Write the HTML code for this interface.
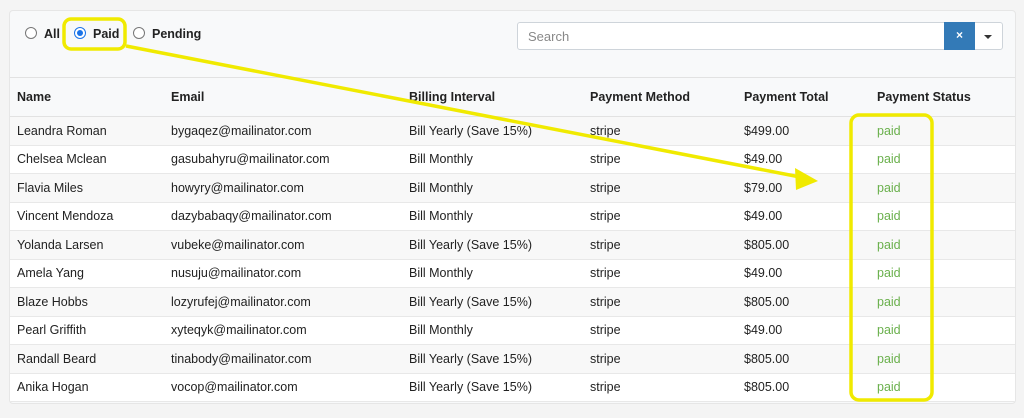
<!DOCTYPE html><html><head><style>
body{margin:0;width:1024px;height:418px;background:#f4f4f4;font-family:"Liberation Sans",sans-serif;position:relative;overflow:hidden}
.panel{position:absolute;left:9px;top:10px;width:1005px;height:392px;background:#f8f9fa;border:1px solid #e6e6e6;border-radius:4px;overflow:hidden}
.radio{position:absolute;top:16px;font-size:12.5px;font-weight:bold;color:#222}
.rb{display:inline-block;width:10px;height:10px;border:1px solid #777;border-radius:50%;background:#fff;vertical-align:-1px;margin-right:7px;position:relative}
.rb.on{border-color:#1a73e8}
.rb.on:after{content:"";position:absolute;left:2px;top:2px;width:6px;height:6px;border-radius:50%;background:#1a73e8}
.search{position:absolute;left:507px;top:11px;width:484px;height:26px;border:1px solid #ced4da;border-radius:3px;background:#fff}
.search span{position:absolute;left:10px;top:6px;font-size:13px;color:#888}
.x{position:absolute;left:426px;top:-1px;width:31px;height:28px;background:#337ab7;color:#fff;font-size:12px;font-weight:bold;text-align:center;line-height:27px}
.dd{position:absolute;left:466px;top:12px;border-left:4px solid transparent;border-right:4px solid transparent;border-top:4px solid #333}
table{position:absolute;left:0;top:66px;width:1005px;border-collapse:collapse;font-size:12.5px;color:#222}
th{text-align:left;font-weight:bold;height:38px;border-top:1px solid #e2e2e2;border-bottom:1px solid #e2e2e2;padding:0 0 0 7px}
td{height:27.5px;padding:0 0 0 7px;border-bottom:1px solid #e8e8e8;background:#fff}
tr:nth-child(even) td{background:#f8f8f8}
td.g{color:#6ab04c}
</style></head><body>
<div class="panel">
<div class="radio" style="left:15px"><span class="rb"></span>All</div>
<div class="radio" style="left:64px"><span class="rb on"></span>Paid</div>
<div class="radio" style="left:123px"><span class="rb"></span>Pending</div>
<div class="search"><span>Search</span><div class="x">×</div><div class="dd"></div></div>
<table>
<colgroup><col style="width:154px"><col style="width:238px"><col style="width:181px"><col style="width:154px"><col style="width:133px"><col></colgroup>
<tr><th>Name</th><th>Email</th><th>Billing Interval</th><th>Payment Method</th><th>Payment Total</th><th>Payment Status</th></tr>
<tr><td>Leandra Roman</td><td>bygaqez@mailinator.com</td><td>Bill Yearly (Save 15%)</td><td>stripe</td><td>$499.00</td><td class="g">paid</td></tr>
<tr><td>Chelsea Mclean</td><td>gasubahyru@mailinator.com</td><td>Bill Monthly</td><td>stripe</td><td>$49.00</td><td class="g">paid</td></tr>
<tr><td>Flavia Miles</td><td>howyry@mailinator.com</td><td>Bill Monthly</td><td>stripe</td><td>$79.00</td><td class="g">paid</td></tr>
<tr><td>Vincent Mendoza</td><td>dazybabaqy@mailinator.com</td><td>Bill Monthly</td><td>stripe</td><td>$49.00</td><td class="g">paid</td></tr>
<tr><td>Yolanda Larsen</td><td>vubeke@mailinator.com</td><td>Bill Yearly (Save 15%)</td><td>stripe</td><td>$805.00</td><td class="g">paid</td></tr>
<tr><td>Amela Yang</td><td>nusuju@mailinator.com</td><td>Bill Monthly</td><td>stripe</td><td>$49.00</td><td class="g">paid</td></tr>
<tr><td>Blaze Hobbs</td><td>lozyrufej@mailinator.com</td><td>Bill Yearly (Save 15%)</td><td>stripe</td><td>$805.00</td><td class="g">paid</td></tr>
<tr><td>Pearl Griffith</td><td>xyteqyk@mailinator.com</td><td>Bill Monthly</td><td>stripe</td><td>$49.00</td><td class="g">paid</td></tr>
<tr><td>Randall Beard</td><td>tinabody@mailinator.com</td><td>Bill Yearly (Save 15%)</td><td>stripe</td><td>$805.00</td><td class="g">paid</td></tr>
<tr><td>Anika Hogan</td><td>vocop@mailinator.com</td><td>Bill Yearly (Save 15%)</td><td>stripe</td><td>$805.00</td><td class="g">paid</td></tr>
</table>
</div>
<svg width="1024" height="418" style="position:absolute;left:0;top:0">
<rect x="64" y="19" width="61" height="30" rx="7" fill="none" stroke="#f0ea00" stroke-width="3.5"/>
<rect x="851" y="115" width="81" height="285" rx="8" fill="none" stroke="#f0ea00" stroke-width="3.5"/>
<line x1="126" y1="46" x2="800" y2="177" stroke="#f0ea00" stroke-width="3.5"/>
<polygon points="818,181 795,168 796,190" fill="#f0ea00"/>
</svg>
</body></html>
